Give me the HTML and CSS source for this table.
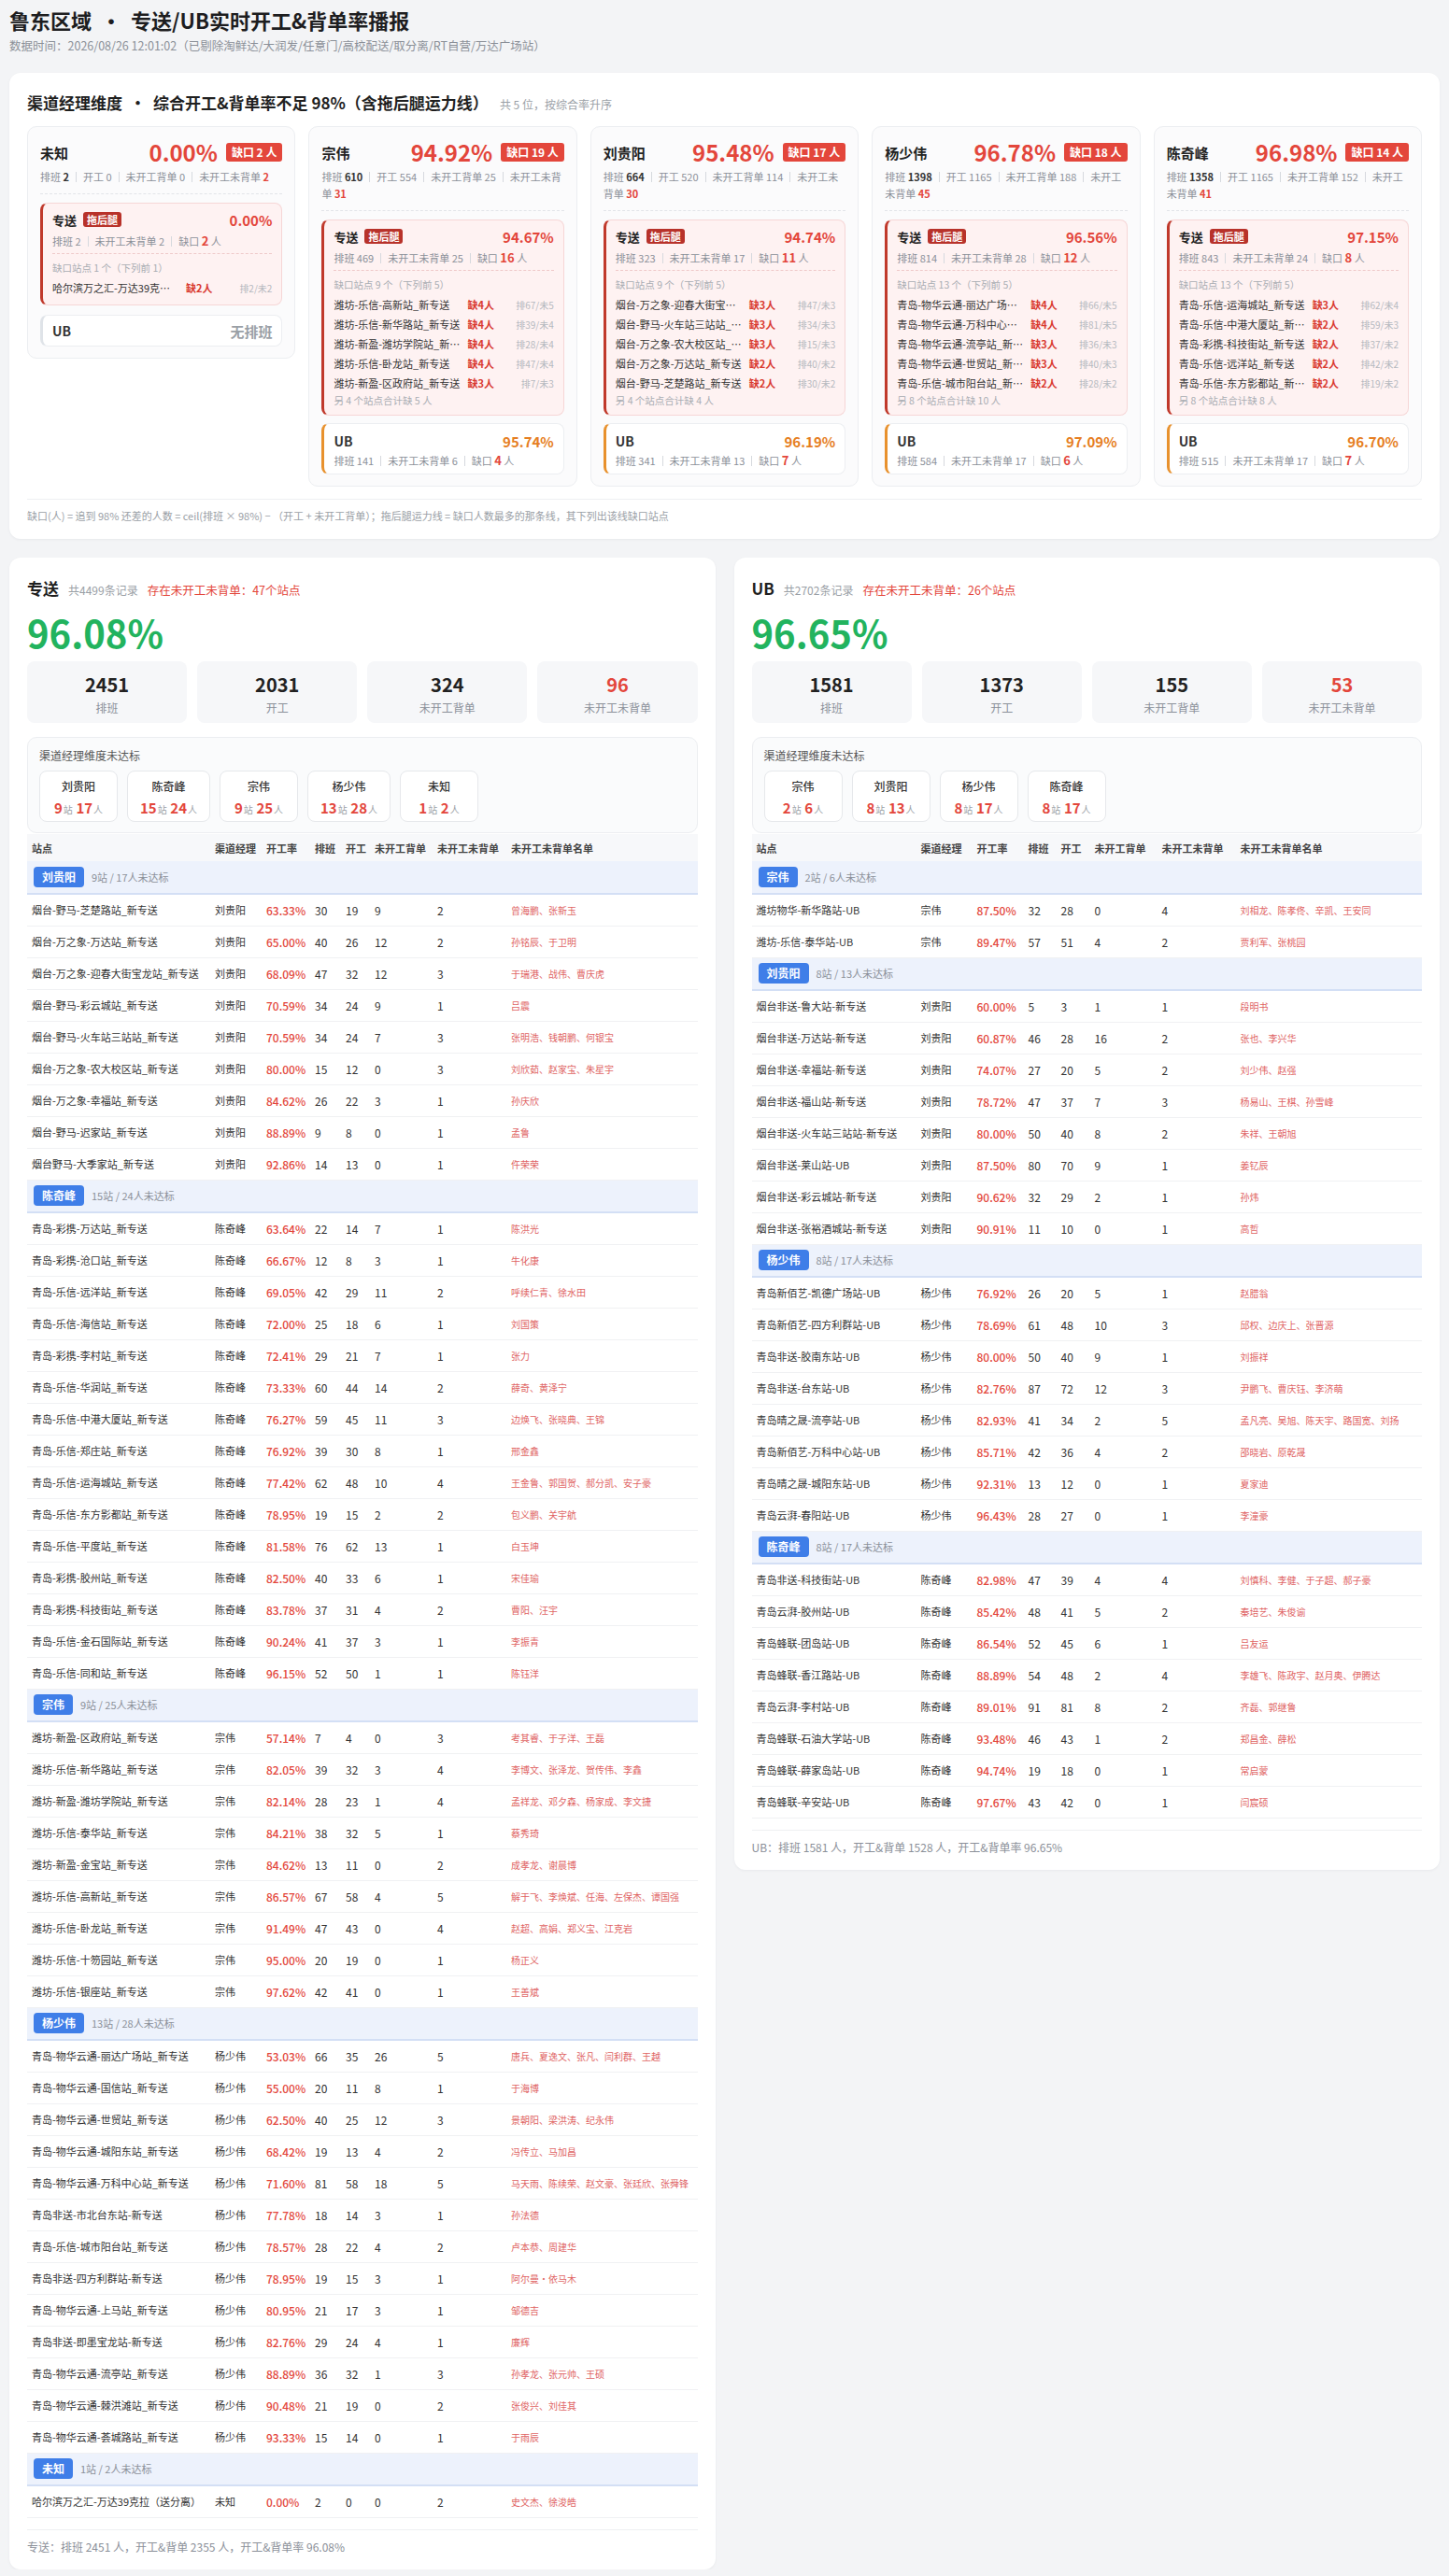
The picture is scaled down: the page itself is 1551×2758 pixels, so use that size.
FILE: index.html
```html
<!DOCTYPE html>
<html lang="zh-CN">
<head>
<meta charset="utf-8">
<title>鲁东区域 · 专送/UB实时开工&amp;背单率播报</title>
<link rel="stylesheet" href="styles.css">
</head>
<body>
<h1 class="page-title">鲁东区域<span class="dot">·</span>专送/UB实时开工&amp;背单率播报</h1>
<div class="page-sub">数据时间：2026/08/26 12:01:02（已剔除淘鲜达/大润发/任意门/高校配送/取分离/RT自营/万达广场站）</div>

<section class="panel overview">
  <div class="ov-head"><span class="ov-title">渠道经理维度<span class="dot2">·</span>综合开工&amp;背单率不足 98%（含拖后腿运力线）</span><span class="ov-hint">共 5 位，按综合率升序</span></div>
  <div class="mgr-row">
    <!-- 未知 -->
    <div class="mgr">
      <div class="mgr-head"><span class="mgr-name">未知</span><span class="mgr-pct">0.00%</span><span class="badge">缺口 2 人</span></div>
      <div class="mgr-stats"><span class="st">排班 <span class="b">2</span></span><span class="sep"></span><span class="st">开工 0</span><span class="sep"></span><span class="st">未开工背单 0</span><span class="sep"></span><span class="st">未开工未背单 <span class="rb">2</span></span></div>
      <div class="lag">
        <div class="lag-head"><span class="lag-title">专送</span><span class="tag">拖后腿</span><span class="lag-pct">0.00%</span></div>
        <div class="lag-stats">排班 2<span class="sep"></span>未开工未背单 2<span class="sep"></span>缺口 <span class="big-r">2</span> 人</div>
        <div class="lag-note">缺口站点 1 个（下列前 1）</div>
        <div class="gap-list">
          <div class="gap-row"><span class="gn">哈尔滨万之汇-万达39克…</span><span class="gq">缺2人</span><span class="gr">排2/未2</span></div>
        </div>
      </div>
      <div class="ub ub-empty"><div class="ub-head"><span class="ub-title">UB</span><span class="ub-none">无排班</span></div></div>
    </div>
    <!-- 宗伟 -->
    <div class="mgr">
      <div class="mgr-head"><span class="mgr-name">宗伟</span><span class="mgr-pct">94.92%</span><span class="badge">缺口 19 人</span></div>
      <div class="mgr-stats"><span class="st">排班 <span class="b">610</span></span><span class="sep"></span><span class="st">开工 554</span><span class="sep"></span><span class="st">未开工背单 25</span><span class="sep"></span><span class="st">未开工未背</span><span class="st">单 <span class="rb">31</span></span></div>
      <div class="lag">
        <div class="lag-head"><span class="lag-title">专送</span><span class="tag">拖后腿</span><span class="lag-pct">94.67%</span></div>
        <div class="lag-stats">排班 469<span class="sep"></span>未开工未背单 25<span class="sep"></span>缺口 <span class="big-r">16</span> 人</div>
        <div class="lag-note">缺口站点 9 个（下列前 5）</div>
        <div class="gap-list">
          <div class="gap-row"><span class="gn">潍坊-乐信-高新站_新专送</span><span class="gq">缺4人</span><span class="gr">排67/未5</span></div>
          <div class="gap-row"><span class="gn">潍坊-乐信-新华路站_新专送</span><span class="gq">缺4人</span><span class="gr">排39/未4</span></div>
          <div class="gap-row"><span class="gn">潍坊-新盈-潍坊学院站_新…</span><span class="gq">缺4人</span><span class="gr">排28/未4</span></div>
          <div class="gap-row"><span class="gn">潍坊-乐信-卧龙站_新专送</span><span class="gq">缺4人</span><span class="gr">排47/未4</span></div>
          <div class="gap-row"><span class="gn">潍坊-新盈-区政府站_新专送</span><span class="gq">缺3人</span><span class="gr">排7/未3</span></div>
        </div>
        <div class="lag-more">另 4 个站点合计缺 5 人</div>
      </div>
      <div class="ub">
        <div class="ub-head"><span class="ub-title">UB</span><span class="ub-pct">95.74%</span></div>
        <div class="ub-stats">排班 141<span class="sep"></span>未开工未背单 6<span class="sep"></span>缺口 <span class="big-r">4</span> 人</div>
      </div>
    </div>
    <!-- 刘贵阳 -->
    <div class="mgr">
      <div class="mgr-head"><span class="mgr-name">刘贵阳</span><span class="mgr-pct">95.48%</span><span class="badge">缺口 17 人</span></div>
      <div class="mgr-stats"><span class="st">排班 <span class="b">664</span></span><span class="sep"></span><span class="st">开工 520</span><span class="sep"></span><span class="st">未开工背单 114</span><span class="sep"></span><span class="st">未开工未</span><span class="st">背单 <span class="rb">30</span></span></div>
      <div class="lag">
        <div class="lag-head"><span class="lag-title">专送</span><span class="tag">拖后腿</span><span class="lag-pct">94.74%</span></div>
        <div class="lag-stats">排班 323<span class="sep"></span>未开工未背单 17<span class="sep"></span>缺口 <span class="big-r">11</span> 人</div>
        <div class="lag-note">缺口站点 9 个（下列前 5）</div>
        <div class="gap-list">
          <div class="gap-row"><span class="gn">烟台-万之象-迎春大街宝…</span><span class="gq">缺3人</span><span class="gr">排47/未3</span></div>
          <div class="gap-row"><span class="gn">烟台-野马-火车站三站站_…</span><span class="gq">缺3人</span><span class="gr">排34/未3</span></div>
          <div class="gap-row"><span class="gn">烟台-万之象-农大校区站_…</span><span class="gq">缺3人</span><span class="gr">排15/未3</span></div>
          <div class="gap-row"><span class="gn">烟台-万之象-万达站_新专送</span><span class="gq">缺2人</span><span class="gr">排40/未2</span></div>
          <div class="gap-row"><span class="gn">烟台-野马-芝楚路站_新专送</span><span class="gq">缺2人</span><span class="gr">排30/未2</span></div>
        </div>
        <div class="lag-more">另 4 个站点合计缺 4 人</div>
      </div>
      <div class="ub">
        <div class="ub-head"><span class="ub-title">UB</span><span class="ub-pct">96.19%</span></div>
        <div class="ub-stats">排班 341<span class="sep"></span>未开工未背单 13<span class="sep"></span>缺口 <span class="big-r">7</span> 人</div>
      </div>
    </div>
    <!-- 杨少伟 -->
    <div class="mgr">
      <div class="mgr-head"><span class="mgr-name">杨少伟</span><span class="mgr-pct">96.78%</span><span class="badge">缺口 18 人</span></div>
      <div class="mgr-stats"><span class="st">排班 <span class="b">1398</span></span><span class="sep"></span><span class="st">开工 1165</span><span class="sep"></span><span class="st">未开工背单 188</span><span class="sep"></span><span class="st">未开工</span><span class="st">未背单 <span class="rb">45</span></span></div>
      <div class="lag">
        <div class="lag-head"><span class="lag-title">专送</span><span class="tag">拖后腿</span><span class="lag-pct">96.56%</span></div>
        <div class="lag-stats">排班 814<span class="sep"></span>未开工未背单 28<span class="sep"></span>缺口 <span class="big-r">12</span> 人</div>
        <div class="lag-note">缺口站点 13 个（下列前 5）</div>
        <div class="gap-list">
          <div class="gap-row"><span class="gn">青岛-物华云通-丽达广场…</span><span class="gq">缺4人</span><span class="gr">排66/未5</span></div>
          <div class="gap-row"><span class="gn">青岛-物华云通-万科中心…</span><span class="gq">缺4人</span><span class="gr">排81/未5</span></div>
          <div class="gap-row"><span class="gn">青岛-物华云通-流亭站_新…</span><span class="gq">缺3人</span><span class="gr">排36/未3</span></div>
          <div class="gap-row"><span class="gn">青岛-物华云通-世贸站_新…</span><span class="gq">缺3人</span><span class="gr">排40/未3</span></div>
          <div class="gap-row"><span class="gn">青岛-乐信-城市阳台站_新…</span><span class="gq">缺2人</span><span class="gr">排28/未2</span></div>
        </div>
        <div class="lag-more">另 8 个站点合计缺 10 人</div>
      </div>
      <div class="ub">
        <div class="ub-head"><span class="ub-title">UB</span><span class="ub-pct">97.09%</span></div>
        <div class="ub-stats">排班 584<span class="sep"></span>未开工未背单 17<span class="sep"></span>缺口 <span class="big-r">6</span> 人</div>
      </div>
    </div>
    <!-- 陈奇峰 -->
    <div class="mgr">
      <div class="mgr-head"><span class="mgr-name">陈奇峰</span><span class="mgr-pct">96.98%</span><span class="badge">缺口 14 人</span></div>
      <div class="mgr-stats"><span class="st">排班 <span class="b">1358</span></span><span class="sep"></span><span class="st">开工 1165</span><span class="sep"></span><span class="st">未开工背单 152</span><span class="sep"></span><span class="st">未开工</span><span class="st">未背单 <span class="rb">41</span></span></div>
      <div class="lag">
        <div class="lag-head"><span class="lag-title">专送</span><span class="tag">拖后腿</span><span class="lag-pct">97.15%</span></div>
        <div class="lag-stats">排班 843<span class="sep"></span>未开工未背单 24<span class="sep"></span>缺口 <span class="big-r">8</span> 人</div>
        <div class="lag-note">缺口站点 13 个（下列前 5）</div>
        <div class="gap-list">
          <div class="gap-row"><span class="gn">青岛-乐信-运海城站_新专送</span><span class="gq">缺3人</span><span class="gr">排62/未4</span></div>
          <div class="gap-row"><span class="gn">青岛-乐信-中港大厦站_新…</span><span class="gq">缺2人</span><span class="gr">排59/未3</span></div>
          <div class="gap-row"><span class="gn">青岛-彩携-科技街站_新专送</span><span class="gq">缺2人</span><span class="gr">排37/未2</span></div>
          <div class="gap-row"><span class="gn">青岛-乐信-远洋站_新专送</span><span class="gq">缺2人</span><span class="gr">排42/未2</span></div>
          <div class="gap-row"><span class="gn">青岛-乐信-东方影都站_新…</span><span class="gq">缺2人</span><span class="gr">排19/未2</span></div>
        </div>
        <div class="lag-more">另 8 个站点合计缺 8 人</div>
      </div>
      <div class="ub">
        <div class="ub-head"><span class="ub-title">UB</span><span class="ub-pct">96.70%</span></div>
        <div class="ub-stats">排班 515<span class="sep"></span>未开工未背单 17<span class="sep"></span>缺口 <span class="big-r">7</span> 人</div>
      </div>
    </div>
  </div>
  <div class="ov-note">缺口(人) = 追到 98% 还差的人数 = ceil(排班 × 98%) − （开工 + 未开工背单）；拖后腿运力线 = 缺口人数最多的那条线，其下列出该线缺口站点</div>
</section>

<div class="main">
  <!-- 专送 -->
  <section class="panel sec">
    <div class="sec-head"><span class="sec-title">专送</span><span class="sec-cnt">共4499条记录</span><span class="sec-warn">存在未开工未背单：47个站点</span></div>
    <div class="big-pct">96.08%</div>
    <div class="stat-grid">
      <div class="stat"><div class="num">2451</div><div class="lbl">排班</div></div>
      <div class="stat"><div class="num">2031</div><div class="lbl">开工</div></div>
      <div class="stat"><div class="num">324</div><div class="lbl">未开工背单</div></div>
      <div class="stat"><div class="num red">96</div><div class="lbl">未开工未背单</div></div>
    </div>
    <div class="mgr-panel">
      <div class="mp-title">渠道经理维度未达标</div>
      <div class="chips">
        <div class="chip"><div class="chip-name">刘贵阳</div><div class="chip-num"><span class="cn">9</span><span class="cu">站</span> <span class="cn">17</span><span class="cu">人</span></div></div>
        <div class="chip"><div class="chip-name">陈奇峰</div><div class="chip-num"><span class="cn">15</span><span class="cu">站</span> <span class="cn">24</span><span class="cu">人</span></div></div>
        <div class="chip"><div class="chip-name">宗伟</div><div class="chip-num"><span class="cn">9</span><span class="cu">站</span> <span class="cn">25</span><span class="cu">人</span></div></div>
        <div class="chip"><div class="chip-name">杨少伟</div><div class="chip-num"><span class="cn">13</span><span class="cu">站</span> <span class="cn">28</span><span class="cu">人</span></div></div>
        <div class="chip"><div class="chip-name">未知</div><div class="chip-num"><span class="cn">1</span><span class="cu">站</span> <span class="cn">2</span><span class="cu">人</span></div></div>
      </div>
    </div>
    <table class="tbl zs">
      <colgroup><col class="c1"><col class="c2"><col class="c3"><col class="c4"><col class="c5"><col class="c6"><col class="c7"><col class="c8"></colgroup>
      <thead><tr><th>站点</th><th>渠道经理</th><th>开工率</th><th>排班</th><th>开工</th><th>未开工背单</th><th>未开工未背单</th><th>未开工未背单名单</th></tr></thead>
      <tbody>
        <tr class="grp"><td colspan="8"><span class="gtag">刘贵阳</span><span class="gtxt">9站 / 17人未达标</span></td></tr>
        <tr><td>烟台-野马-芝楚路站_新专送</td><td>刘贵阳</td><td class="pct">63.33%</td><td class="n">30</td><td class="n">19</td><td class="n">9</td><td class="n">2</td><td class="nm">曾海鹏、张新玉</td></tr>
        <tr><td>烟台-万之象-万达站_新专送</td><td>刘贵阳</td><td class="pct">65.00%</td><td class="n">40</td><td class="n">26</td><td class="n">12</td><td class="n">2</td><td class="nm">孙铭辰、于卫明</td></tr>
        <tr><td>烟台-万之象-迎春大街宝龙站_新专送</td><td>刘贵阳</td><td class="pct">68.09%</td><td class="n">47</td><td class="n">32</td><td class="n">12</td><td class="n">3</td><td class="nm">于瑞港、战伟、曹庆虎</td></tr>
        <tr><td>烟台-野马-彩云城站_新专送</td><td>刘贵阳</td><td class="pct">70.59%</td><td class="n">34</td><td class="n">24</td><td class="n">9</td><td class="n">1</td><td class="nm">吕震</td></tr>
        <tr><td>烟台-野马-火车站三站站_新专送</td><td>刘贵阳</td><td class="pct">70.59%</td><td class="n">34</td><td class="n">24</td><td class="n">7</td><td class="n">3</td><td class="nm">张明浩、钱朝鹏、何银宝</td></tr>
        <tr><td>烟台-万之象-农大校区站_新专送</td><td>刘贵阳</td><td class="pct">80.00%</td><td class="n">15</td><td class="n">12</td><td class="n">0</td><td class="n">3</td><td class="nm">刘欣茹、赵家宝、朱星宇</td></tr>
        <tr><td>烟台-万之象-幸福站_新专送</td><td>刘贵阳</td><td class="pct">84.62%</td><td class="n">26</td><td class="n">22</td><td class="n">3</td><td class="n">1</td><td class="nm">孙庆欣</td></tr>
        <tr><td>烟台-野马-迟家站_新专送</td><td>刘贵阳</td><td class="pct">88.89%</td><td class="n">9</td><td class="n">8</td><td class="n">0</td><td class="n">1</td><td class="nm">孟鲁</td></tr>
        <tr><td>烟台野马-大季家站_新专送</td><td>刘贵阳</td><td class="pct">92.86%</td><td class="n">14</td><td class="n">13</td><td class="n">0</td><td class="n">1</td><td class="nm">仵荣荣</td></tr>

        <tr class="grp"><td colspan="8"><span class="gtag">陈奇峰</span><span class="gtxt">15站 / 24人未达标</span></td></tr>
        <tr><td>青岛-彩携-万达站_新专送</td><td>陈奇峰</td><td class="pct">63.64%</td><td class="n">22</td><td class="n">14</td><td class="n">7</td><td class="n">1</td><td class="nm">陈洪光</td></tr>
        <tr><td>青岛-彩携-沧口站_新专送</td><td>陈奇峰</td><td class="pct">66.67%</td><td class="n">12</td><td class="n">8</td><td class="n">3</td><td class="n">1</td><td class="nm">牛化康</td></tr>
        <tr><td>青岛-乐信-远洋站_新专送</td><td>陈奇峰</td><td class="pct">69.05%</td><td class="n">42</td><td class="n">29</td><td class="n">11</td><td class="n">2</td><td class="nm">呼续仁青、徐水田</td></tr>
        <tr><td>青岛-乐信-海信站_新专送</td><td>陈奇峰</td><td class="pct">72.00%</td><td class="n">25</td><td class="n">18</td><td class="n">6</td><td class="n">1</td><td class="nm">刘国策</td></tr>
        <tr><td>青岛-彩携-李村站_新专送</td><td>陈奇峰</td><td class="pct">72.41%</td><td class="n">29</td><td class="n">21</td><td class="n">7</td><td class="n">1</td><td class="nm">张力</td></tr>
        <tr><td>青岛-乐信-华润站_新专送</td><td>陈奇峰</td><td class="pct">73.33%</td><td class="n">60</td><td class="n">44</td><td class="n">14</td><td class="n">2</td><td class="nm">薛奇、黄泽宁</td></tr>
        <tr><td>青岛-乐信-中港大厦站_新专送</td><td>陈奇峰</td><td class="pct">76.27%</td><td class="n">59</td><td class="n">45</td><td class="n">11</td><td class="n">3</td><td class="nm">边焕飞、张晓典、王锦</td></tr>
        <tr><td>青岛-乐信-郑庄站_新专送</td><td>陈奇峰</td><td class="pct">76.92%</td><td class="n">39</td><td class="n">30</td><td class="n">8</td><td class="n">1</td><td class="nm">邢金鑫</td></tr>
        <tr><td>青岛-乐信-运海城站_新专送</td><td>陈奇峰</td><td class="pct">77.42%</td><td class="n">62</td><td class="n">48</td><td class="n">10</td><td class="n">4</td><td class="nm">王金鲁、郭国贺、郝分凯、安子豪</td></tr>
        <tr><td>青岛-乐信-东方影都站_新专送</td><td>陈奇峰</td><td class="pct">78.95%</td><td class="n">19</td><td class="n">15</td><td class="n">2</td><td class="n">2</td><td class="nm">包义鹏、关宇航</td></tr>
        <tr><td>青岛-乐信-平度站_新专送</td><td>陈奇峰</td><td class="pct">81.58%</td><td class="n">76</td><td class="n">62</td><td class="n">13</td><td class="n">1</td><td class="nm">白玉坤</td></tr>
        <tr><td>青岛-彩携-胶州站_新专送</td><td>陈奇峰</td><td class="pct">82.50%</td><td class="n">40</td><td class="n">33</td><td class="n">6</td><td class="n">1</td><td class="nm">宋佳瑜</td></tr>
        <tr><td>青岛-彩携-科技街站_新专送</td><td>陈奇峰</td><td class="pct">83.78%</td><td class="n">37</td><td class="n">31</td><td class="n">4</td><td class="n">2</td><td class="nm">曹阳、汪宇</td></tr>
        <tr><td>青岛-乐信-金石国际站_新专送</td><td>陈奇峰</td><td class="pct">90.24%</td><td class="n">41</td><td class="n">37</td><td class="n">3</td><td class="n">1</td><td class="nm">李振青</td></tr>
        <tr><td>青岛-乐信-同和站_新专送</td><td>陈奇峰</td><td class="pct">96.15%</td><td class="n">52</td><td class="n">50</td><td class="n">1</td><td class="n">1</td><td class="nm">陈钰洋</td></tr>

        <tr class="grp"><td colspan="8"><span class="gtag">宗伟</span><span class="gtxt">9站 / 25人未达标</span></td></tr>
        <tr><td>潍坊-新盈-区政府站_新专送</td><td>宗伟</td><td class="pct">57.14%</td><td class="n">7</td><td class="n">4</td><td class="n">0</td><td class="n">3</td><td class="nm">考其睿、于子洋、王磊</td></tr>
        <tr><td>潍坊-乐信-新华路站_新专送</td><td>宗伟</td><td class="pct">82.05%</td><td class="n">39</td><td class="n">32</td><td class="n">3</td><td class="n">4</td><td class="nm">李博文、张泽龙、贺传伟、李鑫</td></tr>
        <tr><td>潍坊-新盈-潍坊学院站_新专送</td><td>宗伟</td><td class="pct">82.14%</td><td class="n">28</td><td class="n">23</td><td class="n">1</td><td class="n">4</td><td class="nm">孟祥龙、邓夕森、杨家成、李文捷</td></tr>
        <tr><td>潍坊-乐信-泰华站_新专送</td><td>宗伟</td><td class="pct">84.21%</td><td class="n">38</td><td class="n">32</td><td class="n">5</td><td class="n">1</td><td class="nm">蔡秀琦</td></tr>
        <tr><td>潍坊-新盈-金宝站_新专送</td><td>宗伟</td><td class="pct">84.62%</td><td class="n">13</td><td class="n">11</td><td class="n">0</td><td class="n">2</td><td class="nm">成孝龙、谢晨博</td></tr>
        <tr><td>潍坊-乐信-高新站_新专送</td><td>宗伟</td><td class="pct">86.57%</td><td class="n">67</td><td class="n">58</td><td class="n">4</td><td class="n">5</td><td class="nm">解于飞、李焕斌、任海、左保杰、谭国强</td></tr>
        <tr><td>潍坊-乐信-卧龙站_新专送</td><td>宗伟</td><td class="pct">91.49%</td><td class="n">47</td><td class="n">43</td><td class="n">0</td><td class="n">4</td><td class="nm">赵超、高娟、郑义宝、江克岩</td></tr>
        <tr><td>潍坊-乐信-十笏园站_新专送</td><td>宗伟</td><td class="pct">95.00%</td><td class="n">20</td><td class="n">19</td><td class="n">0</td><td class="n">1</td><td class="nm">杨正义</td></tr>
        <tr><td>潍坊-乐信-银座站_新专送</td><td>宗伟</td><td class="pct">97.62%</td><td class="n">42</td><td class="n">41</td><td class="n">0</td><td class="n">1</td><td class="nm">王善斌</td></tr>

        <tr class="grp"><td colspan="8"><span class="gtag">杨少伟</span><span class="gtxt">13站 / 28人未达标</span></td></tr>
        <tr><td>青岛-物华云通-丽达广场站_新专送</td><td>杨少伟</td><td class="pct">53.03%</td><td class="n">66</td><td class="n">35</td><td class="n">26</td><td class="n">5</td><td class="nm">唐兵、夏逸文、张凡、闫利群、王越</td></tr>
        <tr><td>青岛-物华云通-国信站_新专送</td><td>杨少伟</td><td class="pct">55.00%</td><td class="n">20</td><td class="n">11</td><td class="n">8</td><td class="n">1</td><td class="nm">于海博</td></tr>
        <tr><td>青岛-物华云通-世贸站_新专送</td><td>杨少伟</td><td class="pct">62.50%</td><td class="n">40</td><td class="n">25</td><td class="n">12</td><td class="n">3</td><td class="nm">景朝阳、梁洪涛、纪永伟</td></tr>
        <tr><td>青岛-物华云通-城阳东站_新专送</td><td>杨少伟</td><td class="pct">68.42%</td><td class="n">19</td><td class="n">13</td><td class="n">4</td><td class="n">2</td><td class="nm">冯传立、马加昌</td></tr>
        <tr><td>青岛-物华云通-万科中心站_新专送</td><td>杨少伟</td><td class="pct">71.60%</td><td class="n">81</td><td class="n">58</td><td class="n">18</td><td class="n">5</td><td class="nm">马天雨、陈续荣、赵文豪、张廷欣、张舜锋</td></tr>
        <tr><td>青岛非送-市北台东站-新专送</td><td>杨少伟</td><td class="pct">77.78%</td><td class="n">18</td><td class="n">14</td><td class="n">3</td><td class="n">1</td><td class="nm">孙法德</td></tr>
        <tr><td>青岛-乐信-城市阳台站_新专送</td><td>杨少伟</td><td class="pct">78.57%</td><td class="n">28</td><td class="n">22</td><td class="n">4</td><td class="n">2</td><td class="nm">卢本恭、周建华</td></tr>
        <tr><td>青岛非送-四方利群站-新专送</td><td>杨少伟</td><td class="pct">78.95%</td><td class="n">19</td><td class="n">15</td><td class="n">3</td><td class="n">1</td><td class="nm">阿尔曼·依马木</td></tr>
        <tr><td>青岛-物华云通-上马站_新专送</td><td>杨少伟</td><td class="pct">80.95%</td><td class="n">21</td><td class="n">17</td><td class="n">3</td><td class="n">1</td><td class="nm">邹德吉</td></tr>
        <tr><td>青岛非送-即墨宝龙站-新专送</td><td>杨少伟</td><td class="pct">82.76%</td><td class="n">29</td><td class="n">24</td><td class="n">4</td><td class="n">1</td><td class="nm">廉辉</td></tr>
        <tr><td>青岛-物华云通-流亭站_新专送</td><td>杨少伟</td><td class="pct">88.89%</td><td class="n">36</td><td class="n">32</td><td class="n">1</td><td class="n">3</td><td class="nm">孙孝龙、张元帅、王硕</td></tr>
        <tr><td>青岛-物华云通-棘洪滩站_新专送</td><td>杨少伟</td><td class="pct">90.48%</td><td class="n">21</td><td class="n">19</td><td class="n">0</td><td class="n">2</td><td class="nm">张俊兴、刘佳其</td></tr>
        <tr><td>青岛-物华云通-荟城路站_新专送</td><td>杨少伟</td><td class="pct">93.33%</td><td class="n">15</td><td class="n">14</td><td class="n">0</td><td class="n">1</td><td class="nm">于雨辰</td></tr>

        <tr class="grp"><td colspan="8"><span class="gtag">未知</span><span class="gtxt">1站 / 2人未达标</span></td></tr>
        <tr><td>哈尔滨万之汇-万达39克拉（送分离）</td><td>未知</td><td class="pct">0.00%</td><td class="n">2</td><td class="n">0</td><td class="n">0</td><td class="n">2</td><td class="nm">史文杰、徐浚皓</td></tr>
      </tbody>
    </table>
    <div class="sec-foot">专送：排班 2451 人，开工&amp;背单 2355 人，开工&amp;背单率 96.08%</div>
  </section>

  <!-- UB -->
  <section class="panel sec">
    <div class="sec-head"><span class="sec-title">UB</span><span class="sec-cnt">共2702条记录</span><span class="sec-warn">存在未开工未背单：26个站点</span></div>
    <div class="big-pct">96.65%</div>
    <div class="stat-grid">
      <div class="stat"><div class="num">1581</div><div class="lbl">排班</div></div>
      <div class="stat"><div class="num">1373</div><div class="lbl">开工</div></div>
      <div class="stat"><div class="num">155</div><div class="lbl">未开工背单</div></div>
      <div class="stat"><div class="num red">53</div><div class="lbl">未开工未背单</div></div>
    </div>
    <div class="mgr-panel">
      <div class="mp-title">渠道经理维度未达标</div>
      <div class="chips">
        <div class="chip"><div class="chip-name">宗伟</div><div class="chip-num"><span class="cn">2</span><span class="cu">站</span> <span class="cn">6</span><span class="cu">人</span></div></div>
        <div class="chip"><div class="chip-name">刘贵阳</div><div class="chip-num"><span class="cn">8</span><span class="cu">站</span> <span class="cn">13</span><span class="cu">人</span></div></div>
        <div class="chip"><div class="chip-name">杨少伟</div><div class="chip-num"><span class="cn">8</span><span class="cu">站</span> <span class="cn">17</span><span class="cu">人</span></div></div>
        <div class="chip"><div class="chip-name">陈奇峰</div><div class="chip-num"><span class="cn">8</span><span class="cu">站</span> <span class="cn">17</span><span class="cu">人</span></div></div>
      </div>
    </div>
    <table class="tbl ubt">
      <colgroup><col class="c1"><col class="c2"><col class="c3"><col class="c4"><col class="c5"><col class="c6"><col class="c7"><col class="c8"></colgroup>
      <thead><tr><th>站点</th><th>渠道经理</th><th>开工率</th><th>排班</th><th>开工</th><th>未开工背单</th><th>未开工未背单</th><th>未开工未背单名单</th></tr></thead>
      <tbody>
        <tr class="grp"><td colspan="8"><span class="gtag">宗伟</span><span class="gtxt">2站 / 6人未达标</span></td></tr>
        <tr><td>潍坊物华-新华路站-UB</td><td>宗伟</td><td class="pct">87.50%</td><td class="n">32</td><td class="n">28</td><td class="n">0</td><td class="n">4</td><td class="nm">刘相龙、陈孝佟、辛凯、王安同</td></tr>
        <tr><td>潍坊-乐信-泰华站-UB</td><td>宗伟</td><td class="pct">89.47%</td><td class="n">57</td><td class="n">51</td><td class="n">4</td><td class="n">2</td><td class="nm">贾利军、张桃园</td></tr>

        <tr class="grp"><td colspan="8"><span class="gtag">刘贵阳</span><span class="gtxt">8站 / 13人未达标</span></td></tr>
        <tr><td>烟台非送-鲁大站-新专送</td><td>刘贵阳</td><td class="pct">60.00%</td><td class="n">5</td><td class="n">3</td><td class="n">1</td><td class="n">1</td><td class="nm">段明书</td></tr>
        <tr><td>烟台非送-万达站-新专送</td><td>刘贵阳</td><td class="pct">60.87%</td><td class="n">46</td><td class="n">28</td><td class="n">16</td><td class="n">2</td><td class="nm">张也、李兴华</td></tr>
        <tr><td>烟台非送-幸福站-新专送</td><td>刘贵阳</td><td class="pct">74.07%</td><td class="n">27</td><td class="n">20</td><td class="n">5</td><td class="n">2</td><td class="nm">刘少伟、赵强</td></tr>
        <tr><td>烟台非送-福山站-新专送</td><td>刘贵阳</td><td class="pct">78.72%</td><td class="n">47</td><td class="n">37</td><td class="n">7</td><td class="n">3</td><td class="nm">杨易山、王棋、孙雪峰</td></tr>
        <tr><td>烟台非送-火车站三站站-新专送</td><td>刘贵阳</td><td class="pct">80.00%</td><td class="n">50</td><td class="n">40</td><td class="n">8</td><td class="n">2</td><td class="nm">朱祥、王朝旭</td></tr>
        <tr><td>烟台非送-莱山站-UB</td><td>刘贵阳</td><td class="pct">87.50%</td><td class="n">80</td><td class="n">70</td><td class="n">9</td><td class="n">1</td><td class="nm">姜钇辰</td></tr>
        <tr><td>烟台非送-彩云城站-新专送</td><td>刘贵阳</td><td class="pct">90.62%</td><td class="n">32</td><td class="n">29</td><td class="n">2</td><td class="n">1</td><td class="nm">孙炜</td></tr>
        <tr><td>烟台非送-张裕酒城站-新专送</td><td>刘贵阳</td><td class="pct">90.91%</td><td class="n">11</td><td class="n">10</td><td class="n">0</td><td class="n">1</td><td class="nm">高哲</td></tr>

        <tr class="grp"><td colspan="8"><span class="gtag">杨少伟</span><span class="gtxt">8站 / 17人未达标</span></td></tr>
        <tr><td>青岛新佰艺-凯德广场站-UB</td><td>杨少伟</td><td class="pct">76.92%</td><td class="n">26</td><td class="n">20</td><td class="n">5</td><td class="n">1</td><td class="nm">赵腊翁</td></tr>
        <tr><td>青岛新佰艺-四方利群站-UB</td><td>杨少伟</td><td class="pct">78.69%</td><td class="n">61</td><td class="n">48</td><td class="n">10</td><td class="n">3</td><td class="nm">邱权、边庆上、张晋源</td></tr>
        <tr><td>青岛非送-胶南东站-UB</td><td>杨少伟</td><td class="pct">80.00%</td><td class="n">50</td><td class="n">40</td><td class="n">9</td><td class="n">1</td><td class="nm">刘振祥</td></tr>
        <tr><td>青岛非送-台东站-UB</td><td>杨少伟</td><td class="pct">82.76%</td><td class="n">87</td><td class="n">72</td><td class="n">12</td><td class="n">3</td><td class="nm">尹鹏飞、曹庆钰、李济萌</td></tr>
        <tr><td>青岛晴之晟-流亭站-UB</td><td>杨少伟</td><td class="pct">82.93%</td><td class="n">41</td><td class="n">34</td><td class="n">2</td><td class="n">5</td><td class="nm">孟凡亮、吴旭、陈天宇、路国宽、刘扬</td></tr>
        <tr><td>青岛新佰艺-万科中心站-UB</td><td>杨少伟</td><td class="pct">85.71%</td><td class="n">42</td><td class="n">36</td><td class="n">4</td><td class="n">2</td><td class="nm">邵晓岩、原乾晟</td></tr>
        <tr><td>青岛晴之晟-城阳东站-UB</td><td>杨少伟</td><td class="pct">92.31%</td><td class="n">13</td><td class="n">12</td><td class="n">0</td><td class="n">1</td><td class="nm">夏家迪</td></tr>
        <tr><td>青岛云湃-春阳站-UB</td><td>杨少伟</td><td class="pct">96.43%</td><td class="n">28</td><td class="n">27</td><td class="n">0</td><td class="n">1</td><td class="nm">李潼豪</td></tr>

        <tr class="grp"><td colspan="8"><span class="gtag">陈奇峰</span><span class="gtxt">8站 / 17人未达标</span></td></tr>
        <tr><td>青岛非送-科技街站-UB</td><td>陈奇峰</td><td class="pct">82.98%</td><td class="n">47</td><td class="n">39</td><td class="n">4</td><td class="n">4</td><td class="nm">刘慎科、李健、于子超、郝子豪</td></tr>
        <tr><td>青岛云湃-胶州站-UB</td><td>陈奇峰</td><td class="pct">85.42%</td><td class="n">48</td><td class="n">41</td><td class="n">5</td><td class="n">2</td><td class="nm">秦培艺、朱俊谕</td></tr>
        <tr><td>青岛蜂联-团岛站-UB</td><td>陈奇峰</td><td class="pct">86.54%</td><td class="n">52</td><td class="n">45</td><td class="n">6</td><td class="n">1</td><td class="nm">吕友运</td></tr>
        <tr><td>青岛蜂联-香江路站-UB</td><td>陈奇峰</td><td class="pct">88.89%</td><td class="n">54</td><td class="n">48</td><td class="n">2</td><td class="n">4</td><td class="nm">李雄飞、陈政宇、赵月奥、伊腾达</td></tr>
        <tr><td>青岛云湃-李村站-UB</td><td>陈奇峰</td><td class="pct">89.01%</td><td class="n">91</td><td class="n">81</td><td class="n">8</td><td class="n">2</td><td class="nm">齐磊、郭继鲁</td></tr>
        <tr><td>青岛蜂联-石油大学站-UB</td><td>陈奇峰</td><td class="pct">93.48%</td><td class="n">46</td><td class="n">43</td><td class="n">1</td><td class="n">2</td><td class="nm">郑昌金、薛松</td></tr>
        <tr><td>青岛蜂联-薛家岛站-UB</td><td>陈奇峰</td><td class="pct">94.74%</td><td class="n">19</td><td class="n">18</td><td class="n">0</td><td class="n">1</td><td class="nm">常启蒙</td></tr>
        <tr><td>青岛蜂联-辛安站-UB</td><td>陈奇峰</td><td class="pct">97.67%</td><td class="n">43</td><td class="n">42</td><td class="n">0</td><td class="n">1</td><td class="nm">闫宸硕</td></tr>
      </tbody>
    </table>
    <div class="sec-foot">UB：排班 1581 人，开工&amp;背单 1528 人，开工&amp;背单率 96.65%</div>
  </section>
</div>
</body>
</html>
```

FILE: styles.css
```css
* { box-sizing: border-box; }
html, body { margin: 0; }
body {
  background: #f3f4f6;
  font-family: "Noto Sans CJK SC", "Noto Sans", "Liberation Sans", sans-serif;
  color: #333;
  padding: 7px 10px 0;
}

/* page header */
.page-title { margin: 0; font-size: 22px; line-height: 28px; font-weight: 700; color: #1d1d1f; }
.dot { margin: 0 10px; }
.dot2 { margin: 0 8px; }
.page-sub { margin-top: 5px; font-size: 12.5px; line-height: 18px; color: #8b9098; }

.panel { background: #fff; border-radius: 12px; box-shadow: 0 1px 3px rgba(20, 30, 50, 0.05); }

/* overview */
.overview { margin-top: 20px; padding: 20px 19px 0; }
.ov-head { display: flex; align-items: baseline; height: 24px; line-height: 24px; }
.ov-title { font-size: 17px; font-weight: 700; color: #1f1f1f; }
.ov-hint { margin-left: 12px; font-size: 12px; color: #9aa0a6; }
.mgr-row { display: flex; gap: 14px; align-items: flex-start; margin-top: 13px; }
.mgr { flex: 1 1 0; min-width: 0; background: #fbfbfc; border: 1px solid #eceef1; border-radius: 10px; padding: 13px 13px 12px; }
.mgr-head { display: flex; align-items: center; height: 28px; }
.mgr-name { font-size: 15px; font-weight: 700; color: #222; }
.mgr-pct { margin-left: auto; font-size: 24px; line-height: 28px; font-weight: 700; color: #e3463b; }
.badge { margin-left: 9px; height: 20px; line-height: 20px; padding: 0 6px; border-radius: 3px; background: #e3463b; color: #fff; font-size: 12px; font-weight: 700; }
.mgr-stats { margin-top: 3px; font-size: 11px; line-height: 18px; color: #8b9099; padding-bottom: 9px; border-bottom: 1px dashed #e2e4e8; }
.st { white-space: nowrap; }
.b { color: #333; font-weight: 700; }
.rb { color: #e3463b; font-weight: 700; }
.sep { display: inline-block; width: 1px; height: 11px; background: #d6d9de; margin: 0 7px; vertical-align: -1px; }

.lag { margin-top: 9px; background: #fef2f2; border: 1px solid #f6d6d6; border-left: 3px solid #c0392b; border-radius: 8px; padding: 8px 10px 7px; }
.lag-head { display: flex; align-items: center; height: 18px; }
.lag-title { font-size: 13px; font-weight: 700; color: #222; }
.tag { margin-left: 7px; height: 16px; line-height: 16px; padding: 0 4px; border-radius: 3px; background: #b8322a; color: #fff; font-size: 11px; font-weight: 700; }
.lag-pct { margin-left: auto; font-size: 15px; font-weight: 700; color: #e3463b; }
.lag-stats { margin-top: 5px; height: 23px; font-size: 11px; line-height: 18px; color: #8b9099; border-bottom: 1px dashed #efcaca; }
.big-r { font-size: 13px; line-height: 1; font-weight: 700; color: #e3463b; }
.lag-note { margin-top: 7px; font-size: 10.5px; line-height: 16px; color: #a9adb3; }
.gap-list { margin-top: 3px; }
.gap-row { display: grid; grid-template-columns: 137px auto 1fr; column-gap: 6px; height: 21px; line-height: 21px; font-size: 11px; }
.gn { color: #333; white-space: nowrap; overflow: hidden; text-overflow: ellipsis; }
.gq { color: #d93a30; font-weight: 700; }
.gr { text-align: right; color: #b5b9bf; font-size: 10px; }
.lag-more { font-size: 10.5px; line-height: 16px; color: #a9adb3; }

.ub { margin-top: 8px; background: #fff; border: 1px solid #eceef1; border-left: 3px solid #e8912d; border-radius: 8px; padding: 8px 10px 5px; }
.ub-empty { margin-top: 10px; border-left-color: #dfe3e8; padding: 6px 10px 6px; }
.ub-head { display: flex; align-items: center; height: 20px; }
.ub-title { font-size: 14px; font-weight: 700; color: #333; }
.ub-pct { margin-left: auto; font-size: 15px; font-weight: 700; color: #e67e22; }
.ub-none { margin-left: auto; font-size: 15px; font-weight: 700; color: #9aa0a6; }
.ub-stats { margin-top: 2px; height: 18px; font-size: 11px; line-height: 18px; color: #8b9099; }

.ov-note { margin-top: 13px; border-top: 1px solid #eef0f2; padding: 8px 0 16px; font-size: 11px; line-height: 18px; color: #9aa0a6; }

/* main sections */
.main { display: grid; grid-template-columns: 1fr 1fr; gap: 20px; margin-top: 20px; align-items: start; }
.sec { padding: 20px 19px 15px; }
.sec-head { display: flex; align-items: baseline; height: 26px; line-height: 26px; }
.sec-title { font-size: 17px; font-weight: 700; color: #1f1f1f; }
.sec-cnt { margin-left: 10px; font-size: 12px; color: #9aa0a6; }
.sec-warn { margin-left: 10px; font-size: 12.5px; color: #e3463b; }
.big-pct { margin-top: 10px; font-size: 40px; line-height: 48px; font-weight: 700; color: #22b35e; }
.stat-grid { display: grid; grid-template-columns: repeat(4, 1fr); gap: 11px; margin-top: 7px; }
.stat { height: 66px; background: #f6f7f9; border-radius: 8px; text-align: center; padding-top: 13px; }
.num { font-size: 20px; line-height: 24px; font-weight: 700; color: #222; }
.num.red { color: #e3463b; }
.lbl { margin-top: 5px; font-size: 12px; line-height: 16px; color: #8b9099; }

.mgr-panel { margin-top: 15px; background: #fafbfc; border: 1px solid #eceef1; border-radius: 10px; padding: 11px 12px 11px; }
.mp-title { font-size: 12px; line-height: 16px; color: #555; }
.chips { display: flex; gap: 10px; margin-top: 8px; }
.chip { min-width: 84px; height: 55px; padding: 7px 13px 0; background: #fff; border: 1px solid #e6e8eb; border-radius: 8px; text-align: center; }
.chip-name { font-size: 12px; line-height: 18px; color: #333; font-weight: 500; }
.chip-num { margin-top: 2px; line-height: 22px; white-space: nowrap; }
.cn { font-size: 15px; font-weight: 700; color: #e3463b; }
.cu { font-size: 10px; color: #9aa0a6; margin-left: 1px; }

/* tables */
.tbl { width: 100%; margin-top: 1px; border-collapse: collapse; table-layout: fixed; font-size: 11px; }
.tbl th { height: 29px; padding: 0 0 0 5px; background: #f7f8fa; text-align: left; font-size: 11px; font-weight: 600; color: #444; white-space: nowrap; }
.tbl td { height: 34px; padding: 0 0 0 5px; border-bottom: 1px solid #f0f1f3; white-space: nowrap; overflow: hidden; color: #333; }
.tbl td.n { font-size: 12px; }
.tbl td.pct { font-size: 12px; color: #e3463b; font-weight: 500; }
.tbl td.nm { color: #e06464; font-size: 10px; }
.tbl tr.grp td { height: 35px; padding-left: 7px; background: #edf2fc; border-bottom: 2px solid #d3dff5; }
.gtag { display: inline-block; height: 22px; line-height: 22px; padding: 0 9px; border-radius: 4px; background: #3f7ee8; color: #fff; font-size: 12px; font-weight: 700; vertical-align: middle; }
.gtxt { margin-left: 8px; font-size: 11px; color: #8b9099; vertical-align: middle; }

.zs .c1 { width: 196px; } .zs .c2 { width: 55px; } .zs .c3 { width: 52px; } .zs .c4 { width: 33px; }
.zs .c5 { width: 31px; } .zs .c6 { width: 67px; } .zs .c7 { width: 79px; } .zs .c8 { width: auto; }
.ubt .c1 { width: 176px; } .ubt .c2 { width: 60px; } .ubt .c3 { width: 55px; } .ubt .c4 { width: 35px; }
.ubt .c5 { width: 36px; } .ubt .c6 { width: 72px; } .ubt .c7 { width: 84px; } .ubt .c8 { width: auto; }

.sec-foot { margin-top: 12px; border-top: 1px solid #eef0f2; padding-top: 9px; font-size: 12px; line-height: 18px; color: #8b9099; }
```
